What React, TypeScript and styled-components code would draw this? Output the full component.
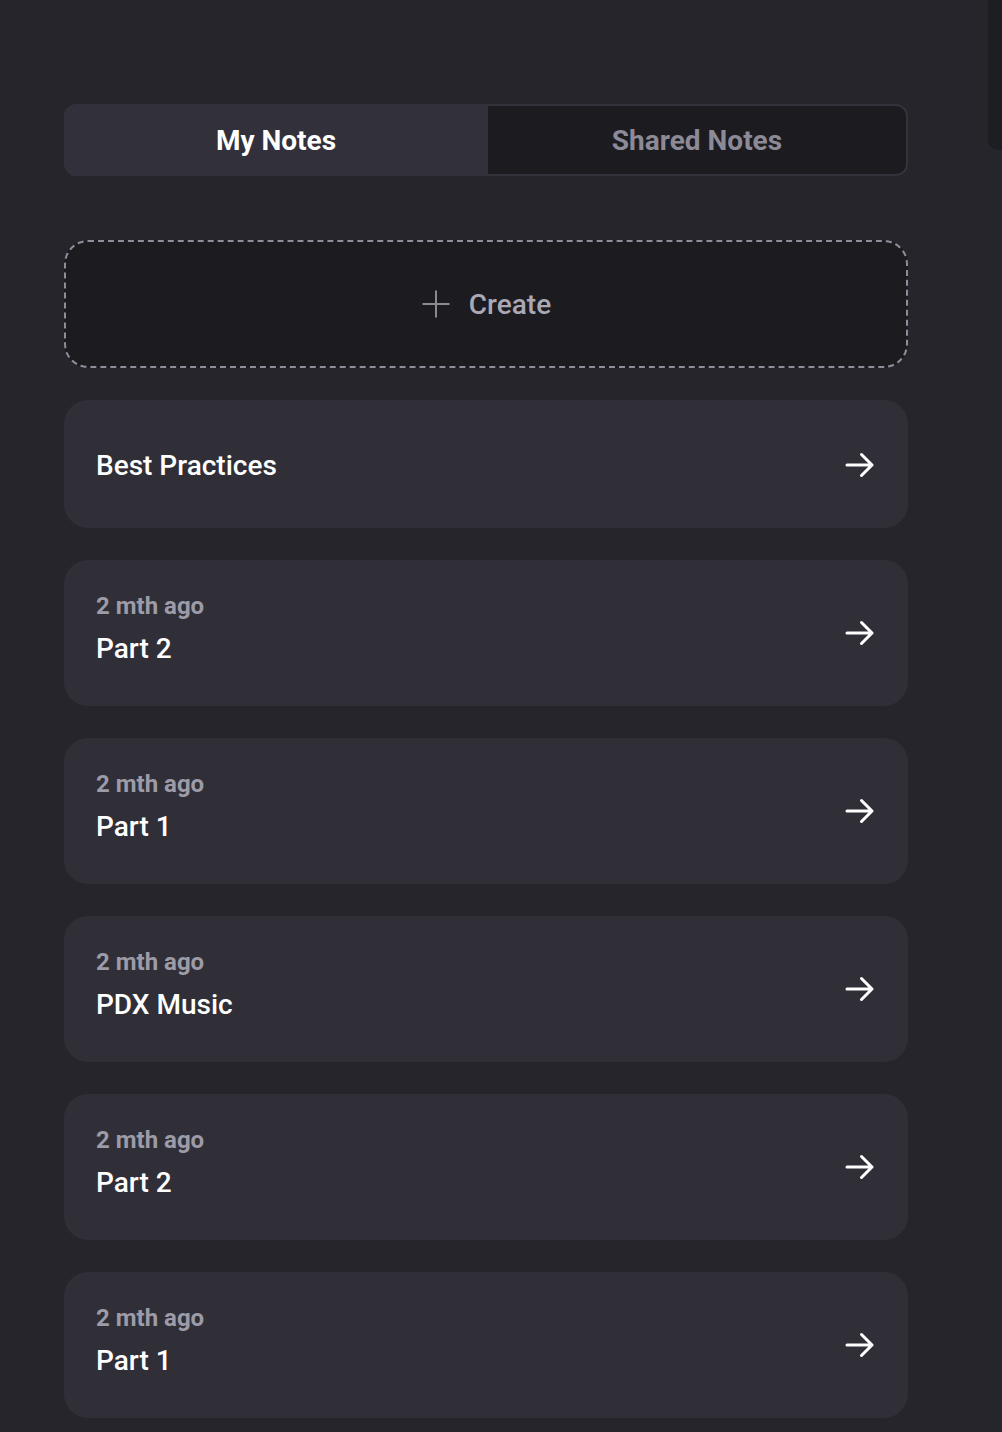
import React from 'react';
import styled, { createGlobalStyle } from 'styled-components';

const notes = [
  { title: 'Best Practices' },
  { title: 'Part 2', when: '2 mth ago' },
  { title: 'Part 1', when: '2 mth ago' },
  { title: 'PDX Music', when: '2 mth ago' },
  { title: 'Part 2', when: '2 mth ago' },
  { title: 'Part 1', when: '2 mth ago' },
];

function ArrowIcon() {
  return (
    <svg width="30" height="26" viewBox="0 0 30 26" fill="none">
      <path
        d="M2 13H27M16.5 2.5L27 13L16.5 23.5"
        stroke="#ffffff"
        strokeWidth="3"
        strokeLinecap="round"
        strokeLinejoin="round"
      />
    </svg>
  );
}

function PlusIcon() {
  return (
    <svg width="30" height="30" viewBox="0 0 30 30" fill="none">
      <path d="M15 1.5V28.5M1.5 15H28.5" stroke="#8b8994" strokeWidth="2" />
    </svg>
  );
}

function App() {
  return (
    <>
      <GlobalStyle />
      <Page>
        <Tabs>
          <Tab $active>My Notes</Tab>
          <Tab>Shared Notes</Tab>
        </Tabs>

        <CreateButton>
          <PlusIcon />
          <span>Create</span>
        </CreateButton>

        <NoteList>
          {notes.map((note, i) => (
            <NoteCard key={i} $hasMeta={!!note.when}>
              <NoteText>
                {note.when && <NoteMeta>{note.when}</NoteMeta>}
                <NoteTitle>{note.title}</NoteTitle>
              </NoteText>
              <ArrowSlot $hasMeta={!!note.when}>
                <ArrowIcon />
              </ArrowSlot>
            </NoteCard>
          ))}
        </NoteList>
      </Page>
      <ScrollThumb />
    </>
  );
}

const GlobalStyle = createGlobalStyle`
  html, body {
    margin: 0;
    padding: 0;
    background: #26252b;
    font-family: Roboto, "Liberation Sans", sans-serif;
    -webkit-font-smoothing: antialiased;
  }
  * {
    box-sizing: border-box;
  }
`;

const Page = styled.main`
  width: 844px;
  margin-left: 64px;
  padding: 104px 0 40px;
  display: flex;
  flex-direction: column;
`;

const Tabs = styled.div`
  display: grid;
  grid-template-columns: 424px 1fr;
  height: 72px;
`;

const Tab = styled.button<{ $active?: boolean }>`
  display: flex;
  align-items: center;
  justify-content: center;
  font-family: inherit;
  font-size: 28px;
  font-weight: 700;
  cursor: pointer;
  color: ${(p) => (p.$active ? '#ffffff' : '#8c8a97')};
  background: ${(p) => (p.$active ? '#32313b' : '#1c1b20')};
  border: ${(p) => (p.$active ? 'none' : '2px solid #34333b')};
  border-left: none;
  border-radius: ${(p) => (p.$active ? '12px 0 0 12px' : '0 12px 12px 0')};
  padding: 0;
`;

const CreateButton = styled.button`
  margin-top: 64px;
  height: 128px;
  display: flex;
  align-items: center;
  justify-content: center;
  gap: 18px;
  background: #1c1b20;
  border: 2px dashed #8f8d99;
  border-radius: 24px;
  color: #aaa8b4;
  font-family: inherit;
  font-size: 28px;
  font-weight: 500;
  cursor: pointer;
  padding: 0;
`;

const NoteList = styled.div`
  margin-top: 32px;
  display: flex;
  flex-direction: column;
  gap: 32px;
`;

const NoteCard = styled.a<{ $hasMeta: boolean }>`
  display: flex;
  align-items: center;
  justify-content: space-between;
  background: #302f38;
  border-radius: 24px;
  padding: ${(p) => (p.$hasMeta ? '33px 32px 39px' : '48px 32px 44px')};
  cursor: pointer;
`;

const NoteText = styled.div`
  display: flex;
  flex-direction: column;
  gap: 12px;
`;

const NoteMeta = styled.span`
  font-size: 24px;
  line-height: 26px;
  font-weight: 700;
  color: #9d9ba7;
`;

const NoteTitle = styled.span`
  font-size: 28px;
  line-height: 36px;
  font-weight: 500;
  color: #ffffff;
`;

const ArrowSlot = styled.span<{ $hasMeta: boolean }>`
  display: flex;
  margin-top: ${(p) => (p.$hasMeta ? '6px' : '-2px')};
  margin-right: 1px;
`;

const ScrollThumb = styled.div`
  position: fixed;
  top: 0;
  right: 0;
  width: 14px;
  height: 150px;
  background: #1e1d22;
  border-radius: 0 0 0 10px;
`;

export default App;
